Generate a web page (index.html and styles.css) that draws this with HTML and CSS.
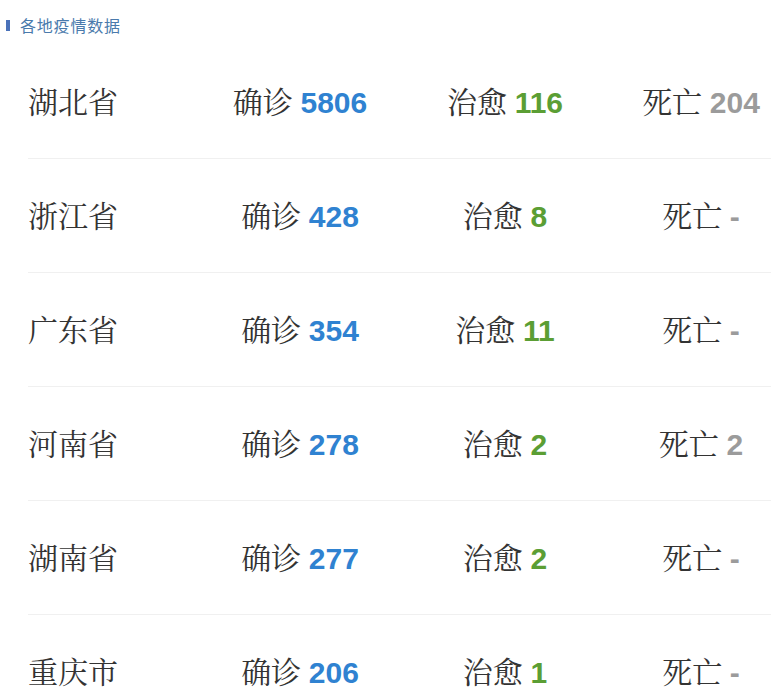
FILE: index.html
```html
<!DOCTYPE html>
<html lang="zh-CN">
<head>
<meta charset="utf-8">
<title>各地疫情数据</title>
<link rel="stylesheet" href="styles.css">
</head>
<body>
<div class="panel">
  <div class="title"><span class="bar"></span><span class="title-text">各地疫情数据</span></div>
  <div class="list">
    <div class="row">
      <div class="name">湖北省</div>
      <div class="cell">确诊 <b class="num blue">5806</b></div>
      <div class="cell">治愈 <b class="num green">116</b></div>
      <div class="cell">死亡 <b class="num gray">204</b></div>
    </div>
    <div class="row">
      <div class="name">浙江省</div>
      <div class="cell">确诊 <b class="num blue">428</b></div>
      <div class="cell">治愈 <b class="num green">8</b></div>
      <div class="cell">死亡 <b class="num gray">-</b></div>
    </div>
    <div class="row">
      <div class="name">广东省</div>
      <div class="cell">确诊 <b class="num blue">354</b></div>
      <div class="cell">治愈 <b class="num green">11</b></div>
      <div class="cell">死亡 <b class="num gray">-</b></div>
    </div>
    <div class="row">
      <div class="name">河南省</div>
      <div class="cell">确诊 <b class="num blue">278</b></div>
      <div class="cell">治愈 <b class="num green">2</b></div>
      <div class="cell">死亡 <b class="num gray">2</b></div>
    </div>
    <div class="row">
      <div class="name">湖南省</div>
      <div class="cell">确诊 <b class="num blue">277</b></div>
      <div class="cell">治愈 <b class="num green">2</b></div>
      <div class="cell">死亡 <b class="num gray">-</b></div>
    </div>
    <div class="row">
      <div class="name">重庆市</div>
      <div class="cell">确诊 <b class="num blue">206</b></div>
      <div class="cell">治愈 <b class="num green">1</b></div>
      <div class="cell">死亡 <b class="num gray">-</b></div>
    </div>
  </div>
</div>
</body>
</html>
```

FILE: styles.css
```css
html, body {
  margin: 0;
  padding: 0;
  background: #fff;
  overflow: hidden;
}
.panel {
  width: 800px;
}
.title {
  display: flex;
  align-items: center;
  height: 45px;
  padding-left: 6px;
  padding-top: 4px;
  box-sizing: border-box;
}
.bar {
  width: 4px;
  height: 11px;
  background: #4a72ba;
  margin-right: 10px;
  margin-top: 2px;
}
.title-text {
  font-family: "Noto Sans CJK SC", "Liberation Sans", sans-serif;
  font-size: 16px;
  color: #4a7aac;
  letter-spacing: 0.8px;
}
.list {
  padding-left: 28px;
}
.row {
  display: grid;
  grid-template-columns: 172px 200px 210px 182px;
  align-items: center;
  height: 113px;
  padding-bottom: 4px;
  box-sizing: border-box;
  border-bottom: 1px solid #f0f0f0;
  font-family: "Noto Serif CJK SC", "Noto Sans CJK SC", "Liberation Serif", serif;
  font-size: 30px;
  color: #333;
}
.row {
  height: 114px;
}
.cell {
  text-align: center;
  white-space: nowrap;
}
.num {
  font-family: "Liberation Sans", Arial, sans-serif;
  font-weight: bold;
  font-size: 30px;
}
.blue { color: #2f82d1; }
.green { color: #5b9e34; }
.gray { color: #9b9b9b; }
```
